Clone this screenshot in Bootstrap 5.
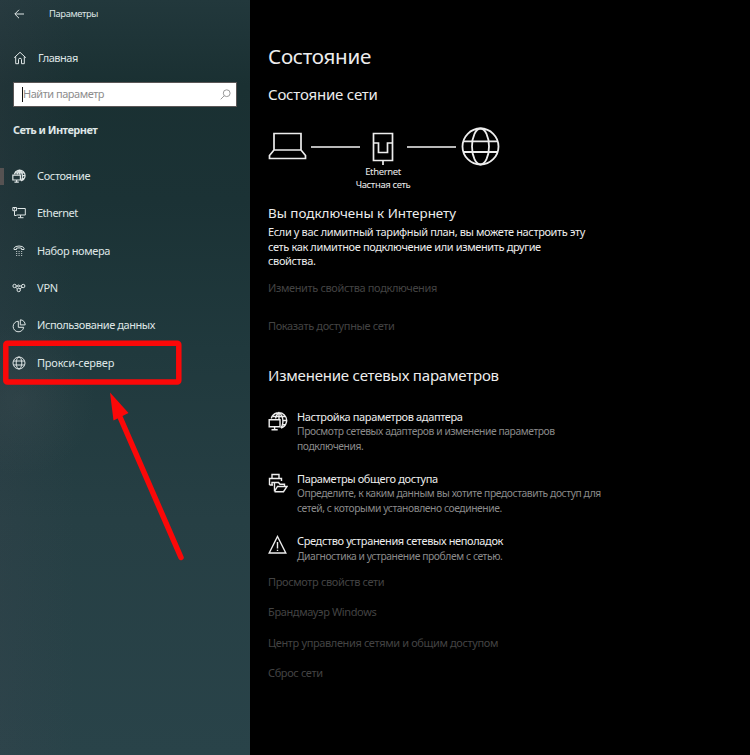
<!DOCTYPE html>
<html lang="ru">
<head>
<meta charset="utf-8">
<meta name="viewport" content="width=device-width, initial-scale=1">
<title>Параметры</title>
<link href="https://cdn.jsdelivr.net/npm/bootstrap@5.3.0/dist/css/bootstrap.min.css" rel="stylesheet">
<script src="https://cdn.jsdelivr.net/npm/bootstrap@5.3.0/dist/js/bootstrap.bundle.min.js" defer></script>
<style>
body{font-family:"Noto Sans","Open Sans",sans-serif;font-size:11px;line-height:14.5px;letter-spacing:-.37px;background:#000;color:#ededed;height:755px;overflow:hidden}
svg{display:block;flex:none;fill:none;stroke:currentColor}
.side{width:250px;height:755px;color:#dfe6e6;background:radial-gradient(circle at 20px 400px,rgba(80,90,95,.2),transparent 75px),linear-gradient(90deg,rgba(70,72,84,.16),transparent 75px),linear-gradient(180deg,#22383c 0,#1a3032 85px,#1b3235 200px,#20393d 350px,#263f44 520px,#294349 755px)}
.titlebar{height:28px;padding-left:14px;font-size:9.4px}
.titlebar svg{margin-right:24px}
.home{height:36px;margin-top:12px;padding-left:13px;letter-spacing:-.5px}
.home svg{margin-right:11px}
.search{height:25px;margin:6px 13px 0 13px;border:1.5px solid #5a5656;background:#fff;color:#8d8d8d;padding:0 5px 0 8px;letter-spacing:-.48px}
.search svg{color:#999}
.caret{width:1px;height:15px;background:#111}
.side-title{margin-top:11px;padding-left:13px;height:24px;font-weight:700;letter-spacing:-.55px}
.side-nav{margin-top:25.6px}
.side-link{height:37.4px;padding-left:12px;color:inherit;text-decoration:none}
.side-link svg{margin-right:11px}
.current{border-left:4px solid #565252;padding-left:8px;height:17px;margin:10.2px 0}
.fit-1{letter-spacing:-.5px}
.fit-2{letter-spacing:-.42px}
.fit-3{letter-spacing:-.2px}
.pane{padding:43px 0 0 18px}
.page-title{font-size:20.6px;line-height:26px;margin:0;font-weight:400;letter-spacing:-.3px}
.sub{font-size:15px;line-height:20px;margin:0;font-weight:400;letter-spacing:-.2px}
.page-title+.sub{margin-top:15px}
.diagram{margin-top:22px;width:240px;height:65px}
.diagram .wire{width:49px;height:2px;background:#b8b8b8;margin-top:20px}
.node{margin-left:10px;margin-right:11px}
.caption{font-size:9.5px;line-height:12.6px;width:100px;margin:0 -37px}
.conn-title{font-size:13.4px;line-height:18px;margin:13px 0 3px;letter-spacing:0}
.info{width:335px}
.dim{color:#434343;text-decoration:none;display:block}
.options{margin-top:25px}
.entry{height:62.3px}
.entry svg{margin:1px 9px 0 0}
.note{color:#8a8a8a;font-size:10.3px;letter-spacing:-.41px}
.more{margin-top:-21.500px}
.more .dim{height:30.4px}
.marker{left:0;top:335px;stroke:#fb0808}
</style>
</head>
<body class="d-flex position-relative">
<aside class="side flex-shrink-0">
  <div class="titlebar d-flex align-items-center"><svg width="11" height="11" viewBox="0 0 11 11"><path d="M10 5H1M5 .8.800 5 5 9.200"/></svg><span>Параметры</span></div>
  <div class="home d-flex align-items-center"><svg width="14" height="14" viewBox="0 0 14 14"><path d="M1.200 6.700 7 1.300l5.800 5.400M2.700 5.400V12.700H5.500V8.500Q5.500 7.300 7 7.300T8.500 8.500V12.700H11.300V5.400"/></svg><span>Главная</span></div>
  <div class="search d-flex align-items-center"><span class="caret"></span><span>Найти параметр</span><svg class="ms-auto" width="11" height="11" viewBox="0 0 11 11"><circle cx="6.700" cy="4.200" r="3.400"/><path d="M4.300 6.700.7 10.300"/></svg></div>
  <div class="side-title d-flex align-items-center">Сеть и Интернет</div>
  <nav class="side-nav">
    <a class="side-link current d-flex align-items-center"><svg width="14" height="14" viewBox="0 0 20 20" stroke-width="1.700"><use href="#netpc"/></svg><span>Состояние</span></a>
    <a class="side-link d-flex align-items-center"><svg width="14" height="14" viewBox="0 0 14 14"><path d="M5.500 2.500h7.800v6.500H4.500M8.500 9v2.500M6 11.700h5.500M2.500 5v4.500h2M.8 1.500h3.700v3.200H.8zM2.600 1.500v2"/></svg><span class="fit-1">Ethernet</span></a>
    <a class="side-link d-flex align-items-center"><svg width="14" height="14" viewBox="0 0 14 14"><path d="M2 5.500V4.400Q2.500 2 7 2T12 4.400V5.500H9.500V4.200Q7 3.500 4.500 4.200V5.500Z"/><path d="M4 7.500h6.500M4 9.500h6.500M4 11.500h6.500" stroke-dasharray="1.200 1.300" opacity=".75"/></svg><span>Набор номера</span></a>
    <a class="side-link d-flex align-items-center"><svg width="14" height="14" viewBox="0 0 14 14"><circle cx="2.600" cy="5" r="1.700"/><circle cx="11.200" cy="5" r="1.700"/><circle cx="6.700" cy="9" r="1.700"/><circle cx="6.500" cy="5" r="1"/><path d="M4.300 5h1.200M7.500 5h2M10 6.300 8 7.800M3.700 6.300l1.600 1.500"/></svg><span class="fit-3">VPN</span></a>
    <a class="side-link d-flex align-items-center"><svg width="14" height="14" viewBox="0 0 14 14"><path d="M6.300 2.200A5.300 5.300 0 1 0 11.700 8.300H6.300ZM8.300.8V5.900H13.200A5 5 0 0 0 8.300.8Z"/></svg><span class="fit-2">Использование данных</span></a>
    <a class="side-link d-flex align-items-center"><svg width="14" height="14" viewBox="0 0 14 14"><circle cx="7" cy="7" r="6"/><ellipse cx="7" cy="7" rx="2.800" ry="6"/><path d="M1.500 5h11M1.500 9h11"/></svg><span class="fit-3">Прокси-сервер</span></a>
  </nav>
</aside>
<main class="pane flex-grow-1">
  <h1 class="page-title">Состояние</h1>
  <h2 class="sub">Состояние сети</h2>
  <div class="diagram d-flex">
    <svg width="40" height="40" viewBox="0 0 40 40" stroke-width="1.700"><path d="M6 7.500H33V24H6ZM6 24 1.500 29.500V32.500H37.500V29.500L33 24"/></svg>
    <div class="wire" style="margin-left:3px"></div>
    <div class="node d-flex flex-column align-items-center">
      <svg width="26" height="40" viewBox="0 0 26 40" stroke-width="1.700"><path d="M3.500 7.500H22.500V34.500H3.500ZM13 34.500V39M3.500 17H8.500V26.500H17.500V17H22.500"/></svg>
      <div class="caption text-center">Ethernet<br>Частная сеть</div>
    </div>
    <div class="wire"></div>
    <svg style="margin-left:4px" width="40" height="40" viewBox="0 0 40 40" stroke-width="1.800"><circle cx="20.500" cy="20.500" r="18"/><ellipse cx="20.500" cy="20.500" rx="8.500" ry="18"/><path d="M3.500 15.300H37.500M3.500 26H37.500"/></svg>
  </div>
  <h3 class="conn-title fw-normal">Вы подключены к Интернету</h3>
  <p class="info mb-0">Если у вас лимитный тарифный план, вы можете настроить эту<br>сеть как лимитное подключение или изменить другие<br>свойства.</p>
  <a class="dim" style="margin-top:12px">Изменить свойства подключения</a>
  <a class="dim" style="margin-top:24px">Показать доступные сети</a>
  <h2 class="sub" style="margin-top:31px">Изменение сетевых параметров</h2>
  <div class="options">
    <div class="entry d-flex"><svg width="20" height="20" viewBox="0 0 20 20" stroke-width="1.400"><g id="netpc"><path d="M3.300 7.500A7.800 7.800 0 1 1 13 17M7.500 7.500Q9 2.500 11 1.500Q15.500 5 14.800 12Q14.300 15.500 12.800 17M11 1.500V8M5 5.500H17.500M14.800 9.500H18.700M14 13.700H17.700"/><path d="M1.200 8.800H12V15.700H1.200ZM6.600 15.700V18.500M3.500 18.700H9.700"/></g></svg><div><div>Настройка параметров адаптера</div><div class="note">Просмотр сетевых адаптеров и изменение параметров<br>подключения.</div></div></div>
    <div class="entry d-flex"><svg width="20" height="20" viewBox="0 0 20 20" stroke-width="1.400"><path d="M4 5.500V1.500H11V5.500M1.500 12V5.500H13.500V8M1.500 12H5M4 12V9.500H7M6.500 18.500V9.500H10.500L12 11.300H16.500V13.500M6.500 18.500 9.500 13.500H19L15.500 18.700H6.500"/></svg><div><div>Параметры общего доступа</div><div class="note">Определите, к каким данным вы хотите предоставить доступ для<br>сетей, с которыми установлено соединение.</div></div></div>
    <div class="entry d-flex"><svg width="20" height="20" viewBox="0 0 20 20" stroke-width="1.400"><path d="M9.500 1.500 17.800 18H1.200ZM9.500 7V13.500M9.500 14.700V16"/></svg><div><div>Средство устранения сетевых неполадок</div><div class="note">Диагностика и устранение проблем с сетью.</div></div></div>
  </div>
  <div class="more">
    <a class="dim">Просмотр свойств сети</a>
    <a class="dim">Брандмауэр Windows</a>
    <a class="dim">Центр управления сетями и общим доступом</a>
    <a class="dim">Сброс сети</a>
  </div>
</main>
<svg class="marker position-absolute" width="200" height="230" viewBox="0 335 200 230"><rect x="5.800" y="343.300" width="173" height="38.700" rx="1.500" stroke-width="5.500"/><path d="M181 557.500 120 417" stroke-width="5.500" stroke-linecap="round"/><path d="M110 392.500 128.500 413 113.500 420.500Z" fill="#fb0808" stroke="none"/></svg>
</body>
</html>
